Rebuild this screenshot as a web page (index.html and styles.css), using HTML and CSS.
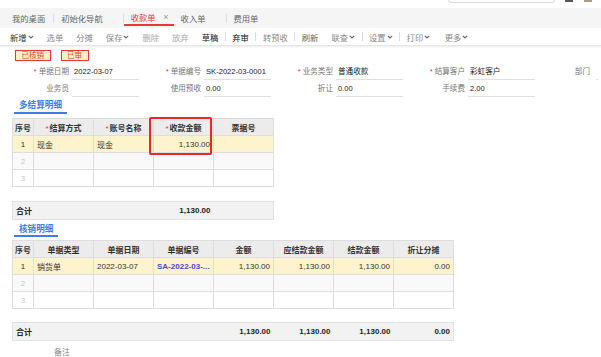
FILE: index.html
```html
<!DOCTYPE html>
<html lang="zh-CN">
<head>
    <meta charset="UTF-8">
    <title>收款单</title>
<link rel="stylesheet" href="styles.css">
</head>
<body>
    <div class="topbar">
        <div class="search"></div>
        <span class="ticon dark"></span>
        <span class="ticon light"></span>
    </div>
    <div class="tabs">
        <div class="tab first">我的桌面</div>
        <span class="tsep"></span>
        <div class="tab">初始化导航<span class="close"></span></div>
        <span class="tsep"></span>
        <div class="tab active">收款单<span class="close">×</span></div>
        <div class="tab">收入单<span class="close"></span></div>
        <span class="tsep"></span>
        <div class="tab">费用单</div>
    </div>
    <div class="toolbar">
        <span class="tool on">新增<svg class="chev" viewBox="0 0 6 4"><path d="M0.8 0.8 L3 3 L5.2 0.8"/></svg></span>
        <span class="tool">选单</span>
        <span class="tool">分摊</span>
        <span class="tool">保存<svg class="chev" viewBox="0 0 6 4"><path d="M0.8 0.8 L3 3 L5.2 0.8"/></svg></span>
        <span class="tool off">删除</span>
        <span class="tool off">放弃</span>
        <span class="tool strong">草稿</span>
        <span class="bsep"></span>
        <span class="tool strong">弃审</span>
        <span class="bsep"></span>
        <span class="tool">转预收</span>
        <span class="bsep"></span>
        <span class="tool mid">刷新</span>
        <span class="tool">联查<svg class="chev" viewBox="0 0 6 4"><path d="M0.8 0.8 L3 3 L5.2 0.8"/></svg></span>
        <span class="bsep"></span>
        <span class="tool">设置<svg class="chev" viewBox="0 0 6 4"><path d="M0.8 0.8 L3 3 L5.2 0.8"/></svg></span>
        <span class="bsep"></span>
        <span class="tool">打印<svg class="chev" viewBox="0 0 6 4"><path d="M0.8 0.8 L3 3 L5.2 0.8"/></svg></span>
        <span class="tool more">更多<svg class="chev" viewBox="0 0 6 4"><path d="M0.8 0.8 L3 3 L5.2 0.8"/></svg></span>
    </div>

    <div class="stamps">
        <span class="stamp">已核销</span>
        <span class="stamp">已审</span>
    </div>

    <div class="form">
        <div class="frow">
            <div class="fgroup"><span class="lbl req">单据日期</span><span class="val">2022-03-07</span></div>
            <div class="fgroup"><span class="lbl req">单据编号</span><span class="val">SK-2022-03-0001</span></div>
            <div class="fgroup"><span class="lbl req">业务类型</span><span class="val">普通收款</span></div>
            <div class="fgroup"><span class="lbl req">结算客户</span><span class="val">彩虹客户</span></div>
            <div class="fgroup last"><span class="lbl">部门</span><span class="val"></span></div>
        </div>
        <div class="frow">
            <div class="fgroup"><span class="lbl">业务员</span><span class="val"></span></div>
            <div class="fgroup"><span class="lbl">使用预收</span><span class="val">0.00</span></div>
            <div class="fgroup"><span class="lbl">折让</span><span class="val">0.00</span></div>
            <div class="fgroup"><span class="lbl">手续费</span><span class="val">2.00</span></div>
        </div>
    </div>

    <div class="sec">多结算明细</div>
    <div class="tablewrap">
        <table class="grid">
            <colgroup><col class="c-idx"><col><col><col><col></colgroup>
            <tr>
                <th class="idx">序号</th>
                <th><span class="star">*</span>结算方式</th>
                <th><span class="star">*</span>账号名称</th>
                <th><span class="star">*</span>收款金额</th>
                <th>票据号</th>
            </tr>
            <tr class="sel">
                <td class="idx">1</td><td>现金</td><td>现金</td><td class="num">1,130.00</td><td></td>
            </tr>
            <tr class="alt">
                <td class="idx empty">2</td><td></td><td></td><td></td><td></td>
            </tr>
            <tr>
                <td class="idx empty">3</td><td></td><td></td><td></td><td></td>
            </tr>
        </table>
        <div class="hl"></div>
    </div>
    <table class="grid total">
        <colgroup><col class="c-idx"><col><col><col><col></colgroup>
        <tr>
            <td colspan="3" class="sum">合计</td><td class="num">1,130.00</td><td></td>
        </tr>
    </table>

    <div class="sec sec2">核销明细</div>
    <table class="grid wide">
        <colgroup><col class="c-idx"><col><col><col><col><col><col><col></colgroup>
        <tr>
            <th class="idx">序号</th><th>单据类型</th><th>单据日期</th><th>单据编号</th>
            <th>金额</th><th>应结款金额</th><th>结款金额</th><th>折让分摊</th>
        </tr>
        <tr class="sel">
            <td class="idx">1</td><td>销货单</td><td>2022-03-07</td><td class="link">SA-2022-03-...</td>
            <td class="num">1,130.00</td><td class="num">1,130.00</td><td class="num">1,130.00</td><td class="num">0.00</td>
        </tr>
        <tr class="alt">
            <td class="idx empty">2</td><td></td><td></td><td></td><td></td><td></td><td></td><td></td>
        </tr>
        <tr>
            <td class="idx empty">3</td><td></td><td></td><td></td><td></td><td></td><td></td><td></td>
        </tr>
    </table>
    <table class="grid wide total">
        <colgroup><col class="c-idx"><col><col><col><col><col><col><col></colgroup>
        <tr>
            <td colspan="4" class="sum">合计</td>
            <td class="num">1,130.00</td><td class="num">1,130.00</td><td class="num">1,130.00</td><td class="num">0.00</td>
        </tr>
    </table>

    <div class="note">备注</div>
</body>
</html>
```

FILE: styles.css
```css
*{
    margin: 0;
    padding: 0;
    box-sizing: border-box;
}
body{
    width: 601px;
    height: 357px;
    overflow: hidden;
    background: #fff;
    color: #333;
    font-family: "Liberation Sans", "Noto Sans CJK SC", sans-serif;
    font-size: 8px;
}
.topbar{
    height: 8px;
    display: flex;
    align-items: flex-start;
    overflow: hidden;
}
.topbar .search{
    width: 107px;
    height: 14px;
    margin-top: -11px;
    margin-left: 448px;
    border: 1px solid #d8d8d8;
    border-radius: 3px;
}
.topbar .ticon{
    width: 8px;
    height: 2px;
    margin-left: 10px;
}
.topbar .dark{
    background: #555;
}
.topbar .light{
    margin-left: 11px;
    background: #a99c86;
}
.tabs{
    height: 20px;
    padding-left: 4px;
    background: #f5f5f6;
    display: flex;
    align-items: center;
    font-size: 8.3px;
    color: #666;
}
.tab{
    height: 20px;
    padding: 2px 7px 0;
    display: flex;
    align-items: center;
    border-bottom: 2px solid transparent;
}
.tab.first{
    padding: 2px 8px 0;
}
.tab.active{
    color: #e4393c;
    border-bottom: 2px solid #e8383d;
    height: 18px;
    margin-top: -2px;
    padding-right: 5px;
}
.tab .close{
    display: inline-block;
    width: 13px;
    text-align: right;
    color: #999;
    font-size: 9px;
}
.tsep{
    width: 1px;
    height: 9px;
    background: #dcdcdc;
}
.toolbar{
    height: 18px;
    padding-left: 3.5px;
    display: flex;
    align-items: center;
    border-bottom: 1px solid #e6e6e6;
    box-shadow: 0 1px 2px rgba(0, 0, 0, 0.08);
    font-size: 8.3px;
}
.tool{
    padding: 0 6.5px;
    display: flex;
    align-items: center;
    color: #888;
}
.tool.on{
    color: #333;
}
.tool.mid{
    color: #666;
}
.tool.off{
    color: #aaa;
}
.tool.strong{
    color: #111;
}
.tool.more{
    margin-left: 1.5px;
}
.chev{
    width: 6px;
    height: 4px;
    margin-left: 1px;
    fill: none;
    stroke: #666;
    stroke-width: 1.1;
}
.bsep{
    width: 1px;
    height: 9px;
    background: #dcdcdc;
}
.stamps{
    display: flex;
    gap: 10px;
    padding-left: 15px;
    margin-top: 4px;
}
.stamp{
    height: 11px;
    padding: 0 5.5px;
    border: 1px solid #e53935;
    background: #fff2c2;
    color: #e53935;
    font-size: 7.5px;
    line-height: 9px;
}
.form{
    margin-top: 3px;
    font-size: 7.6px;
}
.frow{
    height: 17px;
    padding-left: 9px;
    display: flex;
}
.fgroup{
    width: 132px;
    display: flex;
}
.fgroup.last{
    width: 55px;
}
.lbl{
    flex: none;
    width: 60px;
    text-align: right;
    line-height: 15px;
    color: #777;
}
.lbl.req::before{
    content: "*";
    color: #e53935;
    margin-right: 2px;
}
.fgroup.last .lbl{
    width: 53px;
}
.val{
    flex: none;
    width: 67px;
    height: 16px;
    margin-left: 3px;
    padding-left: 2px;
    line-height: 15px;
    border-bottom: 1px solid #e0e0e0;
    color: #222;
}
.fgroup.last .val{
    width: 2px;
    padding: 0;
    margin-left: 6px;
}
.sec{
    width: fit-content;
    margin: 2px 0 0 14px;
    padding: 0 5px 2px;
    line-height: 10px;
    border-bottom: 2px solid #3a7ee6;
    color: #3a7ee6;
    font-size: 8.6px;
    font-weight: bold;
}
.sec.sec2{
    margin-top: 4px;
    padding-bottom: 1px;
}
.tablewrap{
    position: relative;
    width: fit-content;
    margin: 4px 0 0 12px;
}
.grid{
    width: 261px;
    border-collapse: collapse;
    table-layout: fixed;
    font-size: 8px;
}
.grid.wide{
    width: 441px;
    margin: 3px 0 0 12px;
}
.grid col{
    width: 60px;
}
.grid col.c-idx{
    width: 21px;
}
.grid th,
.grid td{
    height: 17px;
    padding: 0 3px;
    border: 1px solid #dedede;
    white-space: nowrap;
    overflow: hidden;
    text-overflow: ellipsis;
}
.grid th{
    background: #ececec;
    font-weight: bold;
    color: #333;
    text-align: center;
}
.star{
    color: #e53935;
    font-weight: normal;
    margin-right: 1px;
}
.grid tr.sel td{
    background: #fdf3cc;
}
.grid tr.alt td{
    background: #f9f9f9;
}
.grid .idx{
    padding: 0;
    text-align: center;
    text-overflow: clip;
}
.grid .idx.empty{
    color: #c8c8c8;
}
.grid .num{
    text-align: right;
}
.grid .link{
    color: #4a4ad6;
    font-weight: bold;
}
.hl{
    position: absolute;
    left: 137px;
    top: -1px;
    width: 63px;
    height: 38px;
    border: 2px solid #e8282b;
    border-radius: 2px;
}
.total{
    margin: 14px 0 0 12px;
    border: 1px solid #e2e2e2;
}
.grid.wide.total{
    margin-top: 13px;
}
.total td{
    height: 18px;
    border: none;
    background: #f2f2f2;
    font-weight: bold;
    color: #222;
}
.note{
    margin: 5px 0 0 54px;
    color: #888;
    font-size: 8px;
}
```
